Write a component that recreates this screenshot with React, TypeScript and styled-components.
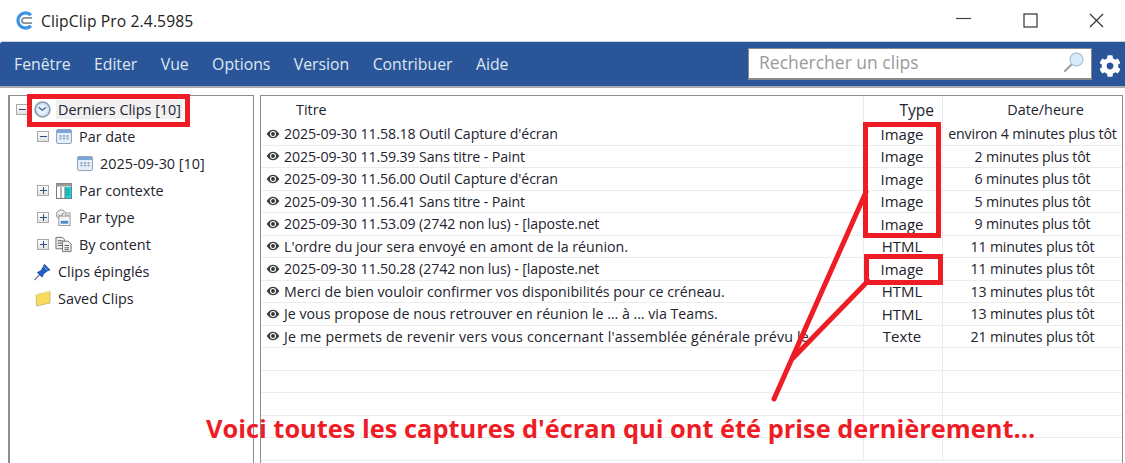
import React, { FC } from "react";
import styled, { createGlobalStyle } from "styled-components";
import { FaCog } from "react-icons/fa";

const red = "#ee1c25";

const GlobalStyle = createGlobalStyle`
  html, body {
    margin: 0;
    padding: 0;
    background: #fff;
  }
  body {
    font-family: "Open Sans", "Noto Sans", sans-serif;
    color: #23232e;
    overflow: hidden;
  }
`;

const Page = styled.div`
  position: relative;
  display: flex;
  flex-direction: column;
  width: 1125px;
  height: 463px;
  overflow: hidden;
`;

const TitleBar = styled.div`
  display: flex;
  align-items: center;
  height: 41px;
  padding-left: 15px;
  flex: none;
`;

const AppTitle = styled.span`
  margin-left: 7px;
  font-size: 15.7px;
  letter-spacing: 0.1px;
  color: #222;
  flex: 1;
`;

const WindowButtons = styled.div`
  display: flex;
  margin-right: -5px;
`;

const WindowButton = styled.div`
  display: flex;
  align-items: center;
  justify-content: center;
  width: 66.5px;
  height: 41px;
`;

const MenuBar = styled.div`
  display: flex;
  align-items: center;
  height: 47px;
  flex: none;
  box-sizing: border-box;
  padding-left: 14px;
  padding-right: 4px;
  background: #2a5699;
  border-top: 1px solid #c8d2e0;
  border-bottom: 2px solid #a9adb3;
  border-top-left-radius: 3px;
`;

const MenuItems = styled.div`
  display: flex;
  gap: 23.4px;
  flex: 1;
`;

const MenuItem = styled.span`
  font-size: 15.8px;
  color: #dfe7f2;
`;

const SearchBox = styled.div`
  display: flex;
  align-items: center;
  justify-content: space-between;
  box-sizing: border-box;
  width: 344px;
  height: 32px;
  padding: 0 6px 4px 10px;
  margin-right: 7px;
  background: #fff;
  border: 1px solid #8a8a8a;
  border-bottom-width: 2px;
`;

const SearchHint = styled.span`
  font-size: 17.5px;
  color: #9a9a9a;
`;

const GearButton = styled.div`
  display: flex;
  color: #fff;
  font-size: 22px;
  margin-top: 4px;
`;

const Body = styled.div`
  display: flex;
  flex: 1;
  gap: 6px;
  min-height: 0;
  padding: 7px 2px 0 8px;
`;

const TreePanel = styled.div`
  box-sizing: border-box;
  width: 246px;
  flex: none;
  padding: 0 0 0 6px;
  border: 1px solid #8d8d8d;
  border-bottom: none;
  border-left-width: 2px;
`;

const TreeRow = styled.div<{ $indent: number }>`
  display: flex;
  align-items: center;
  gap: 5px;
  height: 27.05px;
  padding-left: ${(p) => p.$indent}px;
  font-size: 14.4px;
  white-space: nowrap;
`;

const TreeLabel = styled.span<{ $selected?: boolean }>`
  padding: 0 2px;
  background: ${(p) => (p.$selected ? "#f0f0f0" : "transparent")};
`;

const TreeIconSlot = styled.span`
  display: flex;
  justify-content: center;
  width: 17px;
  flex: none;
`;

const Expander = styled.span`
  display: flex;
  align-items: center;
  justify-content: center;
  box-sizing: border-box;
  width: 12px;
  height: 11px;
  margin-right: 1px;
  border: 1px solid #a9a9a9;
  background: linear-gradient(#fff, #e2e2e2);
  flex: none;
`;

const TablePanel = styled.div`
  flex: 1;
  display: flex;
  flex-direction: column;
  min-width: 0;
  border: 1px solid #8d8d8d;
  border-bottom: none;
`;

const HeaderRow = styled.div`
  display: grid;
  grid-template-columns: 603px 79px 1fr;
  height: 27px;
  flex: none;
  font-size: 14.4px;
`;

const HeaderCell = styled.div<{ $align: string; $pad: string; $size?: number }>`
  display: flex;
  align-items: center;
  justify-content: ${(p) => p.$align};
  padding: ${(p) => p.$pad};
  border-right: 1px solid #eaeaea;
  font-size: ${(p) => p.$size ?? 14.4}px;
  &:last-child {
    border-right: none;
  }
`;

const Row = styled.div`
  display: grid;
  grid-template-columns: 603px 79px 1fr;
  height: 22.5px;
  flex: none;
  box-sizing: border-box;
  border-bottom: 1px solid #ececec;
  font-size: 14.2px;
  white-space: nowrap;
`;

const TitleCell = styled.div<{ $tracking?: number }>`
  display: flex;
  align-items: center;
  gap: 4px;
  padding-left: 5px;
  border-right: 1px solid #ececec;
  overflow: hidden;
  letter-spacing: ${(p) => p.$tracking ?? 0}px;
`;

const TypeCell = styled.div`
  display: flex;
  align-items: center;
  justify-content: center;
  padding-right: 2px;
  border-right: 1px solid #ececec;
  font-size: 15px;
`;

const DateCell = styled.div`
  display: flex;
  align-items: center;
  justify-content: center;
  letter-spacing: -0.2px;
`;

const Overlay = styled.svg`
  position: absolute;
  left: 0;
  top: 0;
  pointer-events: none;
`;

const Mark = styled.div<{ $x: number; $y: number; $w: number; $h: number }>`
  position: absolute;
  box-sizing: border-box;
  left: ${(p) => p.$x}px;
  top: ${(p) => p.$y}px;
  width: ${(p) => p.$w}px;
  height: ${(p) => p.$h}px;
  border: 5.5px solid ${red};
`;

const Caption = styled.div`
  position: absolute;
  left: 206px;
  top: 411px;
  font-size: 25.4px;
  font-weight: 700;
  color: ${red};
  white-space: nowrap;
`;

const Logo = () => (
  <svg width="19" height="19" viewBox="0 0 19 19">
    <path d="M16 4.2A7.6 7.6 0 1 0 16 14.8" fill="none" stroke="#3b93e8" strokeWidth="3.2" />
    <path d="M17 6.8H9.6a2.7 2.7 0 0 0 0 5.4H17" fill="none" stroke="#8c8f94" strokeWidth="1.8" />
  </svg>
);

const Plus = () => (
  <Expander>
    <svg width="9" height="9" viewBox="0 0 9 9">
      <path d="M1 4.5H8M4.5 1V8" stroke="#2f4f80" strokeWidth="1" />
    </svg>
  </Expander>
);

const Minus = () => (
  <Expander>
    <svg width="9" height="9" viewBox="0 0 9 9">
      <path d="M1 4.5H8" stroke="#2f4f80" strokeWidth="1" />
    </svg>
  </Expander>
);

const ClockIcon = () => (
  <svg width="17" height="17" viewBox="0 0 17 17">
    <circle cx="8.5" cy="8.5" r="7.5" fill="#c6ddf2" stroke="#8b9aab" strokeWidth="1.5" />
    <circle cx="8.5" cy="8.5" r="5.2" fill="#e4f0fa" />
    <path d="M4.8 6.2L8.5 9.2L12 6.2" fill="none" stroke="#3d5f86" strokeWidth="1.2" />
  </svg>
);

const CalendarIcon = () => (
  <svg width="16" height="15" viewBox="0 0 16 15">
    <rect x="0.5" y="0.5" width="15" height="14" rx="1.5" fill="#e6eef8" stroke="#8ea6c2" />
    <rect x="1" y="1" width="14" height="3" fill="#7ba7d6" />
    <path d="M3.5 7h2M7 7h2M10.5 7h2M3.5 9.5h2M7 9.5h2M10.5 9.5h2" stroke="#8298b6" strokeWidth="1.4" />
  </svg>
);

const ContextIcon = () => (
  <svg width="16" height="16" viewBox="0 0 16 16">
    <rect x="0.5" y="0.5" width="15" height="15" fill="#fff" stroke="#7d7d7d" />
    <rect x="0.5" y="0.5" width="15" height="3" fill="#9a9a9a" />
    <rect x="9" y="4" width="6" height="11" fill="#19d4d8" />
    <path d="M5 4V15M9 4V15" stroke="#6d6d6d" />
    <path d="M10.5 6.5h3M10.5 9h3M10.5 11.5h3" stroke="#0a8f96" />
  </svg>
);

const TypeIcon = () => (
  <svg width="18" height="18" viewBox="0 0 18 18">
    <circle cx="6.5" cy="5.5" r="5" fill="#efefef" stroke="#8a8a8a" />
    <path d="M4 5.5L6 7.5L9 3.5" fill="none" stroke="#666" />
    <rect x="4" y="7" width="12" height="10" fill="#f5f5f5" stroke="#9a9a9a" />
    <rect x="6" y="12" width="8" height="3" fill="#4a8ad0" />
    <rect x="11" y="3.5" width="5" height="3" fill="#ddd" stroke="#aaa" />
  </svg>
);

const ContentIcon = () => (
  <svg width="18" height="17" viewBox="0 0 18 17">
    <path d="M1 1H8L10 3V13H1Z" fill="#eee" stroke="#6d6d6d" />
    <path d="M3 4.5H8M3 7H8M3 9.5H8" stroke="#555" />
    <path d="M8 5H14L17 8V16H8Z" fill="#f6f6f6" stroke="#6d6d6d" />
    <path d="M10 9.5H15M10 12H15M10 14H15" stroke="#555" />
  </svg>
);

const PinIcon = () => (
  <svg width="18" height="18" viewBox="0 0 18 18">
    <path d="M0.5 17.5L6.5 11" stroke="#5a6b85" strokeWidth="1.2" />
    <path d="M3.5 9.5L7.5 7.5L10 3L11 0.8L17 6.8L14.5 7.8L10.5 10.5L8.5 14.5Z" fill="#1f5fc4" stroke="#163f85" strokeWidth="0.7" />
    <path d="M10.5 3.5L14 7" stroke="#8fbaf0" strokeWidth="1" />
  </svg>
);

const FolderIcon = () => (
  <svg width="16" height="17" viewBox="0 0 16 17">
    <path d="M1 5L15 1V13L1.5 16Z" fill="#f7dc5c" stroke="#b9b08a" strokeWidth="0.8" />
    <path d="M1.5 5L4 3.5L15 1" fill="none" stroke="#fff2a8" strokeWidth="1" />
  </svg>
);

const EyeIcon = () => (
  <svg width="14" height="10" viewBox="0 0 14 10" style={{ flex: "none" }}>
    <path d="M0.6 5C3 1.6 5 0.7 7 0.7S11 1.6 13.4 5C11 8.4 9 9.3 7 9.3S3 8.4 0.6 5Z" fill="#3b3b3b" />
    <circle cx="7" cy="5" r="3" fill="#fff" />
    <circle cx="7" cy="5" r="1.9" fill="#333" />
  </svg>
);

const SearchIcon = () => (
  <svg width="22" height="22" viewBox="0 0 22 22">
    <path d="M2 20L9 13" stroke="#a5a5a5" strokeWidth="2.4" strokeLinecap="round" />
    <circle cx="13.5" cy="8.5" r="6.5" fill="#d6ecfa" stroke="#b5c6d2" strokeWidth="1.4" />
  </svg>
);

interface Clip {
  id: number;
  title: string;
  type: string;
  date: string;
  tracking?: number;
}

const clips: Clip[] = [
  { id: 1, title: "2025-09-30 11.58.18 Outil Capture d'écran", type: "Image", date: "environ 4 minutes plus tôt", tracking: -0.12 },
  { id: 2, title: "2025-09-30 11.59.39 Sans titre - Paint", type: "Image", date: "2 minutes plus tôt", tracking: -0.12 },
  { id: 3, title: "2025-09-30 11.56.00 Outil Capture d'écran", type: "Image", date: "6 minutes plus tôt", tracking: -0.12 },
  { id: 4, title: "2025-09-30 11.56.41 Sans titre - Paint", type: "Image", date: "5 minutes plus tôt", tracking: -0.12 },
  { id: 5, title: "2025-09-30 11.53.09 (2742 non lus) - [laposte.net", type: "Image", date: "9 minutes plus tôt", tracking: -0.12 },
  { id: 6, title: "L'ordre du jour sera envoyé en amont de la réunion.", type: "HTML", date: "11 minutes plus tôt" },
  { id: 7, title: "2025-09-30 11.50.28 (2742 non lus) - [laposte.net", type: "Image", date: "11 minutes plus tôt", tracking: -0.12 },
  { id: 8, title: "Merci de bien vouloir confirmer vos disponibilités pour ce créneau.", type: "HTML", date: "13 minutes plus tôt" },
  { id: 9, title: "Je vous propose de nous retrouver en réunion le … à … via Teams.", type: "HTML", date: "13 minutes plus tôt" },
  { id: 10, title: "Je me permets de revenir vers vous concernant l'assemblée générale prévu le", type: "Texte", date: "21 minutes plus tôt", tracking: 0.19 },
];

const menu = ["Fenêtre", "Editer", "Vue", "Options", "Version", "Contribuer", "Aide"];

const App: FC = () => {
  return (
    <Page>
      <GlobalStyle />
      <TitleBar>
        <Logo />
        <AppTitle>ClipClip Pro 2.4.5985</AppTitle>
        <WindowButtons>
          <WindowButton>
            <svg width="15" height="15" viewBox="0 0 15 15">
              <path d="M0 5.5H15" stroke="#444" strokeWidth="1.2" />
            </svg>
          </WindowButton>
          <WindowButton>
            <svg width="15" height="15" viewBox="0 0 15 15">
              <rect x="1" y="1" width="13" height="13" fill="none" stroke="#333" strokeWidth="1.2" />
            </svg>
          </WindowButton>
          <WindowButton>
            <svg width="15" height="15" viewBox="0 0 15 15">
              <path d="M1 1L14 14M14 1L1 14" stroke="#333" strokeWidth="1.2" />
            </svg>
          </WindowButton>
        </WindowButtons>
      </TitleBar>

      <MenuBar>
        <MenuItems>
          {menu.map((item) => (
            <MenuItem key={item}>{item}</MenuItem>
          ))}
        </MenuItems>
        <SearchBox>
          <SearchHint>Rechercher un clips</SearchHint>
          <SearchIcon />
        </SearchBox>
        <GearButton>
          <FaCog />
        </GearButton>
      </MenuBar>

      <Body>
        <TreePanel>
          <TreeRow $indent={0}>
            <Minus />
            <TreeIconSlot>
              <ClockIcon />
            </TreeIconSlot>
            <TreeLabel $selected>Derniers Clips [10]</TreeLabel>
          </TreeRow>
          <TreeRow $indent={21}>
            <Minus />
            <TreeIconSlot>
              <CalendarIcon />
            </TreeIconSlot>
            <TreeLabel>Par date</TreeLabel>
          </TreeRow>
          <TreeRow $indent={60}>
            <TreeIconSlot>
              <CalendarIcon />
            </TreeIconSlot>
            <TreeLabel>2025-09-30 [10]</TreeLabel>
          </TreeRow>
          <TreeRow $indent={21}>
            <Plus />
            <TreeIconSlot>
              <ContextIcon />
            </TreeIconSlot>
            <TreeLabel>Par contexte</TreeLabel>
          </TreeRow>
          <TreeRow $indent={21}>
            <Plus />
            <TreeIconSlot>
              <TypeIcon />
            </TreeIconSlot>
            <TreeLabel>Par type</TreeLabel>
          </TreeRow>
          <TreeRow $indent={21}>
            <Plus />
            <TreeIconSlot>
              <ContentIcon />
            </TreeIconSlot>
            <TreeLabel>By content</TreeLabel>
          </TreeRow>
          <TreeRow $indent={18}>
            <TreeIconSlot>
              <PinIcon />
            </TreeIconSlot>
            <TreeLabel>Clips épinglés</TreeLabel>
          </TreeRow>
          <TreeRow $indent={18}>
            <TreeIconSlot>
              <FolderIcon />
            </TreeIconSlot>
            <TreeLabel>Saved Clips</TreeLabel>
          </TreeRow>
        </TreePanel>

        <TablePanel>
          <HeaderRow>
            <HeaderCell $align="flex-start" $pad="0 0 0 35px">Titre</HeaderCell>
            <HeaderCell $align="flex-end" $pad="0 8px 0 0" $size={15.5}>Type</HeaderCell>
            <HeaderCell $align="center" $pad="0 0 0 26px">Date/heure</HeaderCell>
          </HeaderRow>
          {clips.map((clip) => (
            <Row key={clip.id}>
              <TitleCell $tracking={clip.tracking}>
                <EyeIcon />
                {clip.title}
              </TitleCell>
              <TypeCell>{clip.type}</TypeCell>
              <DateCell>{clip.date}</DateCell>
            </Row>
          ))}
          {[11, 12, 13, 14, 15].map((id) => (
            <Row key={id}>
              <TitleCell />
              <TypeCell />
              <DateCell />
            </Row>
          ))}
        </TablePanel>
      </Body>

      <Mark $x={27} $y={94} $w={163} $h={33} />
      <Mark $x={863} $y={122} $w={78} $h={116} />
      <Mark $x={864} $y={254} $w={79} $h={31} />
      <Overlay width="1125" height="463">
        <path d="M866 192L774 399" stroke={red} strokeWidth="5" strokeLinecap="round" fill="none" />
        <path d="M868 281L793 358" stroke={red} strokeWidth="5" strokeLinecap="round" fill="none" />
      </Overlay>
      <Caption>Voici toutes les captures d'écran qui ont été prise dernièrement...</Caption>
    </Page>
  );
};

export default App;
